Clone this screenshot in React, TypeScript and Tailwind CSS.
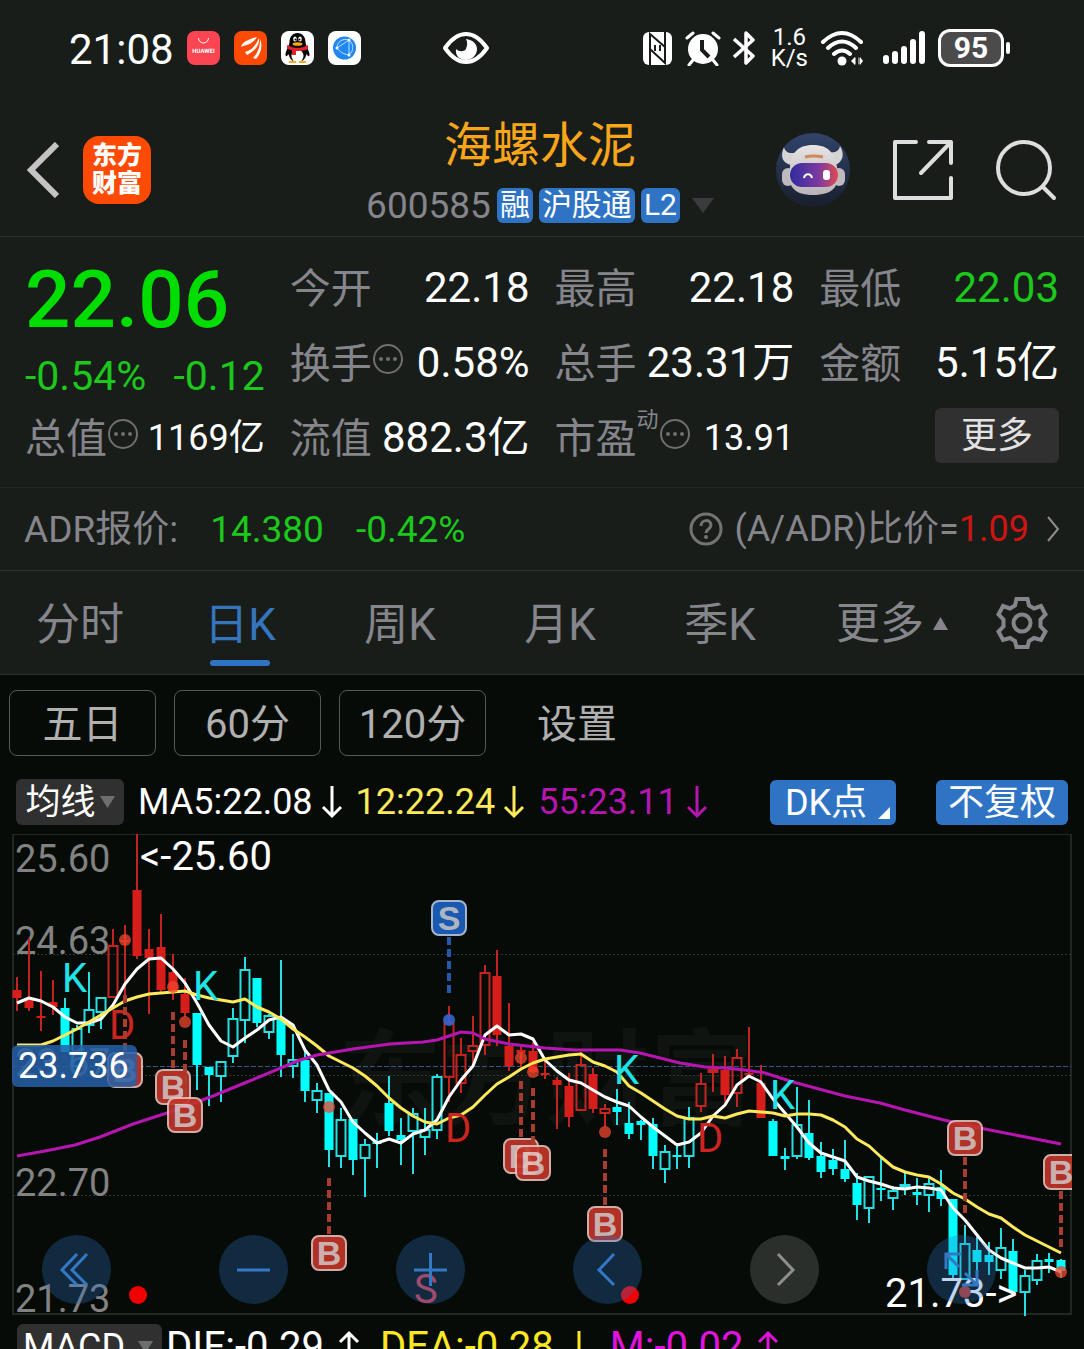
import type { ReactNode } from 'react';

type Kind = 'R' | 'r' | 'C' | 'c';
type Candle = [Kind, number, number, number, number];

const STEP = 12;
const START_X = 17;
const xAt = (i: number) => START_X + i * STEP;

// kind, high, body top, body bottom, low (upper case = filled body)
const CANDLES: Candle[] = [
    ['R', 143, 156, 164, 177], ['R', 104, 166, 174, 177], ['R', 137, 182, 183, 197], ['R', 146, 168, 173, 181],
    ['C', 164, 174, 218, 218], ['c', 191, 194, 233, 238], ['c', 138, 175, 192, 199], ['c', 163, 163, 179, 195],
    ['r', 95, 111, 164, 164], ['R', 91, 106, 107, 165], ['R', 0, 56, 122, 125], ['R', 95, 115, 124, 180],
    ['R', 80, 113, 156, 158], ['R', 120, 138, 159, 166], ['R', 144, 160, 179, 183], ['C', 179, 179, 231, 256],
    ['C', 233, 233, 241, 272], ['c', 227, 227, 243, 268], ['c', 174, 184, 223, 229], ['c', 123, 135, 187, 209],
    ['C', 144, 144, 189, 193], ['c', 180, 181, 199, 205], ['C', 126, 185, 221, 243], ['c', 200, 225, 233, 244],
    ['C', 216, 226, 257, 268], ['c', 249, 256, 267, 279], ['C', 259, 259, 316, 333], ['c', 274, 285, 323, 334],
    ['C', 285, 285, 326, 341], ['c', 305, 310, 325, 363], ['C', 299, 308, 309, 334], ['C', 242, 269, 297, 302],
    ['C', 284, 301, 306, 331], ['c', 274, 279, 298, 340], ['c', 274, 295, 304, 321], ['c', 240, 242, 297, 305],
    ['r', 172, 188, 244, 268], ['r', 204, 220, 250, 259], ['r', 182, 211, 218, 233], ['r', 131, 138, 212, 221],
    ['R', 116, 142, 201, 212], ['R', 169, 212, 232, 237], ['R', 210, 216, 219, 236], ['R', 208, 217, 238, 239],
    ['R', 224, 239, 240, 245], ['R', 243, 246, 251, 295], ['R', 239, 252, 283, 293], ['r', 218, 230, 277, 277],
    ['R', 234, 240, 275, 279], ['r', 270, 274, 280, 293], ['C', 255, 273, 278, 291], ['C', 268, 289, 300, 305],
    ['C', 286, 287, 291, 306], ['C', 284, 290, 322, 335], ['c', 311, 317, 336, 349], ['C', 309, 321, 322, 335],
    ['c', 273, 283, 323, 334], ['r', 239, 249, 273, 278], ['r', 220, 235, 239, 258], ['R', 222, 236, 261, 268],
    ['r', 215, 223, 260, 273], ['R', 193, 239, 240, 243], ['R', 231, 249, 284, 284], ['C', 285, 287, 322, 322],
    ['C', 314, 322, 325, 336], ['c', 253, 290, 323, 325], ['C', 266, 299, 324, 326], ['C', 308, 322, 338, 344],
    ['C', 315, 326, 335, 341], ['C', 306, 335, 345, 348], ['C', 339, 349, 371, 386], ['c', 342, 342, 375, 389],
    ['C', 323, 354, 355, 367], ['c', 352, 356, 365, 376], ['c', 339, 350, 353, 361], ['C', 344, 358, 361, 371],
    ['c', 343, 349, 362, 378], ['C', 336, 353, 365, 372], ['C', 365, 365, 441, 444], ['c', 391, 409, 446, 446],
    ['C', 403, 416, 428, 437], ['C', 408, 421, 428, 441], ['c', 394, 413, 437, 445], ['C', 405, 417, 458, 458],
    ['c', 436, 441, 459, 482], ['c', 420, 426, 447, 451], ['C', 419, 425, 428, 439], ['C', 425, 426, 437, 444],
];

const MA5 = [
    169, 164, 167, 173, 183, 189, 189, 185, 171, 150, 135, 125, 124, 135, 149, 169, 191, 207, 213, 204, 196, 186,
    183, 191, 216, 231, 256, 268, 288, 299, 309, 305, 309, 300, 296, 286, 263, 246, 232, 201, 192, 201, 200, 205,
    226, 237, 246, 249, 256, 263, 268, 272, 283, 293, 302, 311, 308, 299, 282, 271, 251, 242, 248, 265, 279, 293,
    309, 319, 323, 327, 343, 347, 350, 354, 355, 353, 354, 356, 374, 386, 401, 416, 424, 429, 434, 434, 433, 438,
];

const MA12 = [
    211, 211, 211, 207, 201, 195, 188, 181, 174, 167, 163, 160, 159, 158, 157, 161, 164, 166, 168, 165, 173, 178,
    185, 195, 203, 212, 222, 228, 234, 242, 252, 264, 274, 282, 288, 290, 284, 281, 273, 261, 250, 243, 235, 229,
    225, 223, 221, 220, 228, 232, 238, 252, 259, 267, 275, 282, 285, 285, 282, 284, 280, 277, 278, 279, 282, 280,
    280, 281, 286, 293, 305, 312, 323, 333, 338, 341, 343, 350, 359, 365, 373, 380, 384, 393, 401, 407, 413, 419,
];

const MA55 =
    '17,322 45,317 75,311 100,303 133,290 167,279 213,262 247,248 300,226 317,221 353,215 390,210 423,208 437,206 461,198 473,199 485,205 509,210 545,214 575,216 620,216 640,219 680,229 705,233 725,234 745,236 765,239 793,248 845,262 880,269 905,276 940,285 965,291 1000,298 1061,310';

// x, dot y, dash from, dash to, badge centre y
const BUYS = [
    [125, 106, 161, 218, 236],
    [173, 153, 178, 234, 253],
    [185, 188, 206, 262, 281],
    [329, 273, 344, 401, 419],
    [521, 224, 247, 304, 322],
    [533, 238, 254, 310, 329],
    [605, 298, 315, 372, 390],
    [965, 458, 323, 380, 304],
    [1061, 438, 357, 413, 338],
];

const LETTERS = [
    { t: 'K', x: 62, y: 158 },
    { t: 'D', x: 109, y: 205 },
    { t: 'K', x: 193, y: 166 },
    { t: 'D', x: 445, y: 308 },
    { t: 'K', x: 614, y: 250 },
    { t: 'D', x: 697, y: 318 },
    { t: 'K', x: 770, y: 275 },
];

const toPoints = (values: number[]) => values.map((v, i) => `${xAt(i)},${v}`).join(' ');

const Down = ({ className = '' }: { className?: string }) => (
    <svg viewBox="0 0 22 34" className={`h-[34px] w-[22px] ${className}`} fill="none" stroke="currentColor" strokeWidth="3" aria-hidden="true">
        <path d="M11 1v30M2 22l9 9 9-9" />
    </svg>
);

const Up = ({ className = '' }: { className?: string }) => (
    <svg viewBox="0 0 22 34" className={`h-[34px] w-[22px] ${className}`} fill="none" stroke="currentColor" strokeWidth="3" aria-hidden="true">
        <path d="M11 33V3M2 12l9-9 9 9" />
    </svg>
);

const Dots = () => (
    <svg viewBox="0 0 32 32" className="mb-2 h-8 w-8 text-[#6f6f6c]" aria-hidden="true">
        <circle cx="16" cy="16" r="14" fill="none" stroke="currentColor" strokeWidth="2" />
        <circle cx="9" cy="16" r="2" fill="currentColor" />
        <circle cx="16" cy="16" r="2" fill="currentColor" />
        <circle cx="23" cy="16" r="2" fill="currentColor" />
    </svg>
);

const StatusBar = () => (
    <div className="flex h-24 items-center pl-[69px] pr-[74px] text-white">
        <span className="pt-1 text-[42px] leading-none">21:08</span>
        <div className="ml-[13px] flex gap-[14px]">
            <svg viewBox="0 0 33 34" className="h-[34px] w-[33px]" aria-hidden="true">
                <rect width="33" height="34" rx="8" fill="#fb4552" />
                <path d="M11.500 7a5 5 0 0 0 10 0" fill="none" stroke="#fff" strokeWidth="1" />
                <text x="16.500" y="22" textAnchor="middle" fontSize="6" fontWeight="700" fill="#fff" textRendering="geometricPrecision">HUAWEI</text>
            </svg>
            <svg viewBox="0 0 33 34" className="h-[34px] w-[33px]" aria-hidden="true">
                <rect width="33" height="34" rx="8" fill="#ff4a05" />
                <path d="M7 16C8 11 15 8 23 6c-3 5-8 8-14 9zM11 21c7-2 11-7 14-14 1 7-4 13-12 17zM19 27c5-5 7-11 7-19 3 7 1 14-4 20z" fill="#fff" />
            </svg>
            <svg viewBox="0 0 33 34" className="h-[34px] w-[33px]" aria-hidden="true">
                <rect width="33" height="34" rx="8" fill="#fff" />
                <path d="M16.500 2c-5 0-8 4-8 9 0 3-3 7-4 12 0 3 1 3 3 0 1 5 4 8 9 8s8-3 9-8c2 3 3 3 3 0-1-5-4-9-4-12 0-5-3-9-8-9z" fill="#050505" />
                <ellipse cx="16.500" cy="25" rx="6" ry="6.500" fill="#fff" />
                <ellipse cx="14" cy="8" rx="1.800" ry="2.500" fill="#fff" />
                <ellipse cx="19" cy="8" rx="1.800" ry="2.500" fill="#fff" />
                <circle cx="14.500" cy="8.500" r="1" />
                <circle cx="18.500" cy="8.500" r="1" />
                <ellipse cx="16.500" cy="13" rx="5" ry="1.800" fill="#f9a91a" />
                <path d="M6 14c7 4 14 4 21 0v4c-4 2-8 2-12 2v4h-4v-5c-2 0-4-1-5-2z" fill="#e5202b" />
                <path d="M8 31h7M18 31h7" stroke="#f9a91a" strokeWidth="2" />
            </svg>
            <svg viewBox="0 0 33 34" className="h-[34px] w-[33px]" aria-hidden="true">
                <rect width="33" height="34" rx="8" fill="#fff" />
                <circle cx="16.500" cy="17" r="11.500" fill="#1f86f2" />
                <path d="M9 17L21 9M9 17c3 4 6 6 12 7M21 9v15M21 9c-7-2-12 2-12 8M21 24c5-4 5-11 0-15" fill="none" stroke="#bfe6ff" strokeWidth="1" />
                <circle cx="9" cy="17" r="1.500" fill="#fff" />
                <circle cx="21" cy="9" r="1.500" fill="#fff" />
                <circle cx="21" cy="24" r="1.500" fill="#fff" />
            </svg>
        </div>
        <svg viewBox="0 0 46 32" className="ml-[82px] h-8 w-[46px]" aria-hidden="true">
            <path d="M2 16C9 6 16 2 23 2s14 4 21 14c-7 10-14 14-21 14S9 26 2 16z" fill="none" stroke="#fff" strokeWidth="4" strokeLinejoin="round" />
            <path d="M23 7c7 1 11 5 11 10 0 6-5 11-11 11s-11-4-10-11c3 3 8 3 10 0 1-3 2-6 0-10z" fill="#fff" />
        </svg>
        <div className="ml-auto flex items-center gap-3">
            <svg viewBox="0 0 31 34" className="h-[34px] w-[31px]" aria-hidden="true">
                <rect x="1" y="1" width="29" height="33" rx="6" fill="#fff" />
                <path d="M8 34V3l15 13M23 0v32L8 18M13 14v6M18 14v6" fill="none" stroke="#191d1a" strokeWidth="2" />
            </svg>
            <svg viewBox="0 0 36 36" className="h-9 w-9" aria-hidden="true">
                <circle cx="18" cy="19" r="15" fill="#fff" />
                <path d="M2 8l6-5M34 8l-6-5M8 30l-4 5M28 30l4 5" stroke="#fff" strokeWidth="3" strokeLinecap="round" />
                <path d="M17 10v10l7 7" fill="none" stroke="#191d1a" strokeWidth="4" />
            </svg>
            <svg viewBox="0 0 22 36" className="h-9 w-[22px]" fill="none" stroke="#fff" strokeWidth="3.500" strokeLinejoin="round" aria-hidden="true">
                <path d="M1 9l19 17-7 7V3l7 7L1 27" />
            </svg>
            <div className="ml-1 text-center text-2xl leading-[21px]">
                <div>1.6</div>
                <div>K/s</div>
            </div>
            <svg viewBox="0 0 44 36" className="h-9 w-11" fill="none" stroke="#fff" strokeWidth="4" strokeLinecap="round" aria-hidden="true">
                <path d="M3 12Q22-6 41 12M8 18q14-13 28 0M14 24q8-7 16 0" />
                <circle cx="22" cy="31" r="4.500" fill="#fff" stroke="none" />
                <path d="M31 31l4-4v8zM43 31l-3-4v8z" fill="#fff" stroke="none" />
                <path d="M35 28v6M39 28v6" strokeWidth="1" />
            </svg>
            <svg viewBox="0 0 44 36" className="ml-[6px] h-9 w-11" stroke="#fff" strokeWidth="6" strokeLinecap="round" aria-hidden="true">
                <path d="M4 28v3M13 24v7M22 19v12M31 12v19M40 4v27" />
            </svg>
            <div className="flex items-center gap-[2px]">
                <div className="flex h-[38px] w-[66px] items-center justify-center rounded-xl border-3 border-white bg-[#4b4b4b] text-[30px] font-bold leading-none">95</div>
                <div className="h-3 w-1 rounded bg-white" />
            </div>
        </div>
    </div>
);

const Tag = ({ children }: { children: ReactNode }) => (
    <span className="flex h-[35px] items-center rounded-md bg-[#2f74c4] px-[3px] text-[30px] leading-none text-white">{children}</span>
);

const Header = () => (
    <header className="grid h-[141px] grid-cols-[1fr_auto_1fr] items-center border-b border-[#2e322f] px-[27px] pt-2">
        <div className="flex items-center gap-6">
            <button aria-label="返回">
                <svg viewBox="0 0 32 56" className="h-14 w-8" fill="none" stroke="#c4c4c4" strokeWidth="6" aria-hidden="true">
                    <path d="M30 2L4 28l26 26" />
                </svg>
            </button>
            <div className="flex h-[68px] w-[68px] flex-col items-center justify-center rounded-2xl bg-[#ff4a05] text-[25px] font-black leading-[28px] text-white">
                <span>东方</span>
                <span>财富</span>
            </div>
        </div>
        <div className="flex flex-col items-center pr-1">
            <h1 className="text-5xl leading-[58px] text-[#faa61a]">海螺水泥</h1>
            <div className="mt-3 flex items-center gap-[6px]">
                <span className="text-[37px] leading-none text-[#85858b]">600585</span>
                <Tag>融</Tag>
                <Tag>沪股通</Tag>
                <Tag>L2</Tag>
                <svg viewBox="0 0 22 15" className="ml-[6px] h-[15px] w-[22px]" aria-hidden="true"><path d="M0 0h22L11 15z" fill="#3a3b3c" /></svg>
            </div>
        </div>
        <div className="flex items-center justify-end gap-[42px]">
            <svg viewBox="0 0 76 76" className="h-[76px] w-[76px]" aria-hidden="true">
                <defs>
                    <linearGradient id="sky" x1="0" y1="0" x2="0" y2="1"><stop stopColor="#31436b" /><stop offset="1" stopColor="#191e2c" /></linearGradient>
                    <linearGradient id="visor"><stop stopColor="#2e2c9e" /><stop offset=".6" stopColor="#7d3aa0" /><stop offset="1" stopColor="#e04a50" /></linearGradient>
                    <linearGradient id="shell" x1="0" y1="0" x2="0" y2="1"><stop stopColor="#e6e3e3" /><stop offset="1" stopColor="#b9b4b8" /></linearGradient>
                </defs>
                <circle cx="38" cy="38" r="37" fill="url(#sky)" />
                <path d="M9 15c-4 9-2 16 7 18l8-14c-7 4-14 2-15-4zM65 14c5 8 3 16-5 19l-10-14c8 3 14 1 15-5z" fill="#d6d3d4" />
                <rect x="7" y="36" width="12" height="18" rx="6" fill="#bdb9bd" />
                <rect x="58" y="36" width="12" height="18" rx="6" fill="#bdb9bd" />
                <path d="M38 13c-16 0-22 9-23 22-1 8-1 15 2 20 4 6 12 8 21 8s18-2 22-8c3-5 3-13 2-20-2-13-8-22-24-22z" fill="url(#shell)" />
                <rect x="15" y="31" width="48" height="24" rx="12" fill="url(#visor)" />
                <path d="M29 46c1-5 7-5 8 0" fill="none" stroke="#fff" strokeWidth="2" />
                <rect x="48" y="38" width="7" height="10" rx="3" fill="#fff" />
                <path d="M30 25q9-2 18 0" stroke="#d08a58" strokeWidth="3" fill="none" />
            </svg>
            <button aria-label="分享">
                <svg viewBox="0 0 60 60" className="h-[60px] w-[60px]" fill="none" stroke="#dedede" strokeWidth="4" strokeLinecap="round" strokeLinejoin="round" aria-hidden="true">
                    <path d="M23 2H2v56h56V38M36 2h22v21M57 3L28 33" />
                </svg>
            </button>
            <button aria-label="搜索">
                <svg viewBox="0 0 62 62" className="h-[62px] w-[62px]" fill="none" stroke="#dedede" strokeWidth="4" strokeLinecap="round" aria-hidden="true">
                    <circle cx="29" cy="29" r="26" />
                    <path d="M48 48l11 11" />
                </svg>
            </button>
        </div>
    </header>
);

type CellProps = { label: string; value: string; sup?: string; dots?: boolean; small?: boolean; green?: boolean };

const Cell = ({ label, value, sup, dots, small, green }: CellProps) => (
    <div className="flex items-center justify-between whitespace-nowrap">
        <div className="flex items-center text-[#85858b]">
            <span className="pt-1 text-[41px] leading-none">{label}</span>
            {sup && <span className="mb-9 text-[22px] leading-none">{sup}</span>}
            {dots && <Dots />}
        </div>
        <span className={`leading-none ${small ? 'text-4xl' : 'text-[42px]'} ${green ? 'text-[#1bc81b]' : 'text-white'}`}>{value}</span>
    </div>
);

const Quote = () => (
    <section className="grid grid-cols-4 grid-rows-[75px_75px_75px] gap-x-[25px] border-b border-[#222623] px-[25px] pb-3 pt-[13px]">
        <div className="row-span-2 flex flex-col">
            <div className="mt-2 text-[80px] font-medium leading-[84px] text-[#00dd00]">22.06</div>
            <div className="mt-[14px] flex justify-between text-[41px] leading-none text-[#1bc81b]">
                <span>-0.54%</span>
                <span>-0.12</span>
            </div>
        </div>
        <Cell label="今开" value="22.18" />
        <Cell label="最高" value="22.18" />
        <Cell label="最低" value="22.03" green />
        <Cell label="换手" value="0.58%" dots />
        <Cell label="总手" value="23.31万" />
        <Cell label="金额" value="5.15亿" />
        <Cell label="总值" value="1169亿" dots small />
        <Cell label="流值" value="882.3亿" />
        <Cell label="市盈" value="13.91" sup="动" dots small />
        <div className="flex items-center justify-end pb-1">
            <button className="h-[55px] w-[124px] rounded-md bg-[#303031] text-4xl leading-none text-[#e2e2e2]">更多</button>
        </div>
    </section>
);

const AdrRow = () => (
    <a href="#adr" className="flex h-[83px] items-center whitespace-nowrap border-b border-[#2e322f] px-6 text-4xl leading-none text-[#85858b]">
        <span className="text-[37px]">ADR报价:</span>
        <span className="ml-8 text-[37px] text-[#1bc81b]">14.380</span>
        <span className="ml-8 text-[37px] text-[#1bc81b]">-0.42%</span>
        <svg viewBox="0 0 34 34" className="ml-auto h-[34px] w-[34px]" fill="none" stroke="#73746f" strokeWidth="3" aria-hidden="true">
            <circle cx="17" cy="17" r="15" />
            <path d="M12 14c0-7 10-7 10-1 0 4-5 4-5 8" />
            <circle cx="17" cy="25" r="2" fill="#73746f" stroke="none" />
        </svg>
        <span className="ml-3">(A/ADR)比价=</span>
        <span className="text-[#cc1512]">1.09</span>
        <svg viewBox="0 0 13 26" className="ml-[18px] h-[26px] w-[13px]" fill="none" stroke="#8c8c8c" strokeWidth="2" aria-hidden="true">
            <path d="M1 1l10 12L1 25" />
        </svg>
    </a>
);

const Tabs = () => (
    <nav className="grid h-[104px] grid-cols-[160fr_160fr_160fr_160fr_160fr_184fr_100fr] border-b border-[#2e322f] text-[44px] leading-none text-[#85858b]">
        {['分时', '日K', '周K', '月K', '季K'].map((name) => (
            <button key={name} className={`flex flex-col items-center justify-end pb-2 ${name === '日K' ? 'text-[#3575bd]' : ''}`}>
                <span>{name}</span>
                <span className={`mt-[13px] h-[6px] w-[60px] rounded-full ${name === '日K' ? 'bg-[#2f74c4]' : ''}`} />
            </button>
        ))}
        <button className="flex items-center justify-center gap-[9px] pt-[2px]">
            更多
            <svg viewBox="0 0 15 13" className="h-[13px] w-[15px]" aria-hidden="true"><path d="M0 13h15L7.500 0z" fill="#85858b" /></svg>
        </button>
        <button aria-label="图表设置" className="flex items-center justify-center pr-6">
            <svg viewBox="0 0 52 54" className="h-[54px] w-[52px]" fill="none" stroke="#85858b" strokeWidth="4" aria-hidden="true">
                <path d="M20.500 3h11l1.500 6.500 5 3 7-2.500 4.500 8.500-5 5v7l5 5L45 44l-7-2-5 3-1.500 6h-11L19 45l-5-3-7 2-4.500-8.500 5-5v-7l-5-5L7 10l7 2.500 5-3z" />
                <circle cx="26" cy="27" r="8.500" />
            </svg>
        </button>
    </nav>
);

const SubTabs = () => (
    <div className="flex gap-[18px] px-[9px] pt-[15px] text-[40px] leading-none text-[#b0b0b0]">
        {['五日', '60分', '120分'].map((name) => (
            <button key={name} className="h-[66px] w-[147px] rounded-lg border border-[#565856] pt-1">{name}</button>
        ))}
        <button className="ml-[33px] pt-1">设置</button>
    </div>
);

const Legend = () => (
    <div className="mt-[23px] flex items-center whitespace-nowrap px-4 text-4xl leading-none text-white">
        <button className="flex h-[46px] w-[108px] items-center justify-center gap-1 rounded-md bg-[#303031]">
            <span className="text-[35px]">均线</span>
            <svg viewBox="0 0 15 12" className="h-3 w-[15px]" aria-hidden="true"><path d="M0 0h15L7.500 12z" fill="#6d6f6e" /></svg>
        </button>
        <span className="ml-[14px]">MA5:22.08</span>
        <Down className="ml-2" />
        <span className="ml-[13px] text-[#fde95c]">12:22.24</span>
        <Down className="ml-2 text-[#fde95c]" />
        <span className="ml-[13px] text-[#b516b0]">55:23.11</span>
        <Down className="ml-2 text-[#b516b0]" />
        <button className="relative ml-auto h-[45px] w-[126px] rounded-md bg-[#2f74c4] pr-[14px] pt-[2px]">
            DK点
            <svg viewBox="0 0 12 12" className="absolute bottom-[6px] right-[6px] h-3 w-3" aria-hidden="true"><path d="M12 0v12H0z" fill="#fff" /></svg>
        </button>
        <button className="ml-10 h-[45px] w-[132px] rounded-md bg-[#2f74c4] pt-[2px]">不复权</button>
    </div>
);

const Badge = ({ x, y, letter }: { x: number; y: number; letter: string }) => (
    <g opacity=".9">
        <rect x={x - 17} y={y - 17} width="34" height="34" rx="7" fill={letter === 'S' ? '#1c62c4' : '#c4362a'} stroke={letter === 'S' ? '#b9c8e0' : '#e6c0ba'} strokeWidth="2" />
        <text x={x} y={y + 12} textAnchor="middle" className="font-['Liberation_Sans'] text-[34px] font-bold" fill={letter === 'S' ? '#c0c8d6' : '#e0c4c2'}>{letter}</text>
    </g>
);

const Bars = () => (
    <g>
        {CANDLES.map(([kind, high, top, bottom, low], i) => {
            const filled = kind === 'R' || kind === 'C';
            const color = kind === 'C' ? '#00ffff' : kind === 'c' ? '#25dfe2' : kind === 'R' ? '#d81e1a' : '#c42420';
            const wick = kind === 'C' || kind === 'c' ? '#25dfe2' : '#c42420';
            const x = xAt(i);
            return (
                <g key={i}>
                    <path d={`M${x} ${high}V${top}M${x} ${bottom}V${low}`} stroke={wick} strokeWidth="2" />
                    {filled ? (
                        <rect x={x - 4.5} y={top} width="9" height={Math.max(2, bottom - top)} fill={color} />
                    ) : (
                        <rect x={x - 4.5} y={top + 1} width="9" height={Math.max(2, bottom - top - 2)} fill="none" stroke={color} strokeWidth="2" />
                    )}
                </g>
            );
        })}
    </g>
);

const CircleButton = ({ label, grey, children }: { label: string; grey?: boolean; children: ReactNode }) => (
    <button aria-label={label} className={`h-[69px] w-[69px] rounded-full ${grey ? 'bg-white/15 text-[#8e8e8e]' : 'bg-[#2f74c4]/30 text-[#3378c4]'}`}>
        <svg viewBox="0 0 69 69" className="h-full w-full" fill="none" stroke="currentColor" strokeWidth="3" aria-hidden="true">{children}</svg>
    </button>
);

const Chart = () => (
    <div className="relative mt-[9px]">
        <svg viewBox="0 0 1084 484" className="block w-full" role="img" aria-label="日K线图">
            <defs>
                <clipPath id="plot"><rect x="12" y="0" width="1060" height="484" /></clipPath>
            </defs>
            <text x="338" y="283" fill="#101411" className="text-[104px] font-bold">东方财富</text>
            <rect x="13" y="0" width="1058" height="480" fill="none" stroke="#222624" strokeWidth="2" />
            <path d="M13 120.500H1071M13 241.500H1071M13 361.500H1071" stroke="#333634" strokeWidth="1" strokeDasharray="2 2" />
            <path d="M13 232.500H1071" stroke="#33568c" strokeWidth="1" strokeDasharray="5 2" />

            <g fill="#828282" className="text-[38px]">
                <text x="15" y="38">25.60</text>
                <text x="15" y="120">24.63</text>
                <text x="15" y="242">23.67</text>
                <text x="15" y="362">22.70</text>
                <text x="15" y="478">21.73</text>
            </g>

            <Bars />

            <g fill="none" strokeWidth="3" strokeLinejoin="round">
                <polyline points={toPoints(MA5)} stroke="#ffffff" />
                <polyline points={toPoints(MA12)} stroke="#fde95c" />
                <polyline points={MA55} stroke="#b516b0" />
            </g>

            <g className="text-[40px]">
                {LETTERS.map(({ t, x, y }) => (
                    <text key={x} x={x} y={y} fill={t === 'K' ? '#1fe3e6' : '#cc2420'}>{t}</text>
                ))}
            </g>

            <g clipPath="url(#plot)">
                {BUYS.map(([x, dot, from, to, badge]) => (
                    <g key={x}>
                        <path d={`M${x} ${from}V${to}`} stroke="#a83c2e" strokeWidth="4" strokeDasharray="8 4" />
                        <circle cx={x} cy={dot} r="6" fill="#f2452e" opacity=".75" />
                        <Badge x={x} y={badge} letter="B" />
                    </g>
                ))}
            </g>
            <path d="M449 103V160" stroke="#2458a8" strokeWidth="4" strokeDasharray="8 4" />
            <circle cx="449" cy="186" r="6" fill="#3565d0" opacity=".9" />
            <Badge x={449} y={84} letter="S" />

            <rect x="12" y="211" width="125" height="42" rx="6" fill="#2560a8" opacity=".85" />
            <g fill="#fff">
                <text x="18" y="244" className="text-4xl">23.736</text>
                <text x="140" y="36" className="text-[40px]">&lt;-25.60</text>
                <text x="885" y="473" className="text-[40px]">21.73-&gt;</text>
            </g>
            <text x="414" y="469" fill="#d03a48" className="text-[40px]">S</text>
            <circle cx="138" cy="461" r="9" fill="#f20000" />
            <circle cx="630" cy="461" r="9" fill="#f20000" />
        </svg>
        <div className="absolute inset-x-0 bottom-[14px] flex justify-between pl-[42px] pr-[88px]">
            <CircleButton label="最早"><path d="M35 19L20 35l15 15M45 19L30 35l15 15" /></CircleButton>
            <CircleButton label="缩小"><path d="M18 35h33" /></CircleButton>
            <CircleButton label="放大"><path d="M18 35h33M34.500 18v33" /></CircleButton>
            <CircleButton label="向左"><path d="M41 19L26 35l15 15" /></CircleButton>
            <CircleButton label="向右" grey><path d="M28 19l15 16-15 15" /></CircleButton>
            <CircleButton label="全屏"><path d="M32 32L19 19M19 34V19h15M38 38l12 12M50 35v15H35" /></CircleButton>
        </div>
    </div>
);

const Macd = () => (
    <div className="mt-[6px] flex items-center whitespace-nowrap pl-[17px] text-[40px] leading-none text-white">
        <button className="flex h-[46px] w-[145px] shrink-0 items-center justify-between rounded-md bg-[#303031] pl-[6px] pr-[9px] text-4xl">
            MACD
            <svg viewBox="0 0 15 12" className="h-3 w-[15px]" aria-hidden="true"><path d="M0 0h15L7.500 12z" fill="#6d6f6e" /></svg>
        </button>
        <span className="ml-1">DIF:-0.29</span>
        <Up className="ml-[14px]" />
        <span className="ml-5 text-[#fbe723]">DEA:-0.28</span>
        <Down className="ml-[14px] text-[#fbe723]" />
        <span className="ml-5 text-[#e012dc]">M:-0.02</span>
        <Up className="ml-[14px] text-[#e012dc]" />
    </div>
);

export default function App() {
    return (
        <div className="h-screen overflow-hidden bg-[#070b08] font-['Roboto','Noto_Sans_CJK_SC',sans-serif]">
            <div className="bg-[#191d1a]">
                <StatusBar />
                <Header />
                <Quote />
                <AdrRow />
                <Tabs />
            </div>
            <SubTabs />
            <Legend />
            <Chart />
            <Macd />
        </div>
    );
}
